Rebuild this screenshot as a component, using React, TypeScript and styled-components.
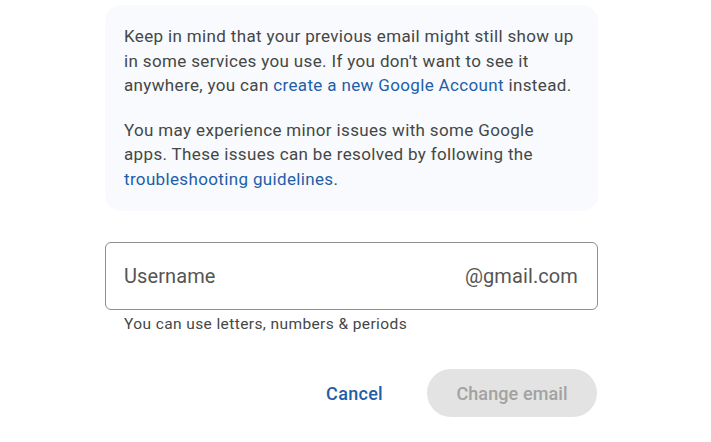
import React from "react";
import styled, { createGlobalStyle } from "styled-components";

const Global = createGlobalStyle`
  html, body { margin: 0; padding: 0; background: #ffffff; }
  body { font-family: Roboto, "Noto Sans", Arial, sans-serif; -webkit-font-smoothing: antialiased; }
`;

const Page = styled.div`
  width: 711px;
  height: 442px;
  overflow: hidden;
  padding: 5px 0 0 105px;
  box-sizing: border-box;
`;

const Column = styled.div`
  width: 493px;
  display: flex;
  flex-direction: column;
`;

const Notice = styled.div`
  background: #f8fafd;
  border-radius: 16px;
  padding: 19px 20px 20px 19px;
  display: flex;
  flex-direction: column;
  gap: 20px;
`;

const Para = styled.p`
  margin: 0;
  font-size: 17px;
  line-height: 24.5px;
  color: #444746;
  letter-spacing: 0.35px;
`;

const Link = styled.a`
  color: #1f5ea8;
  text-decoration: none;
`;

const Field = styled.div`
  margin-top: 31px;
  height: 68px;
  border: 1.5px solid #8e8e8e;
  border-radius: 6px;
  box-sizing: border-box;
  display: flex;
  align-items: center;
  justify-content: space-between;
  padding: 0 19px 0 18px;
  font-size: 20px;
  letter-spacing: 0.1px;
  color: #555;
`;

const Hint = styled.div`
  margin-top: 5px;
  padding-left: 19px;
  font-size: 15.5px;
  letter-spacing: 0.4px;
  color: #444746;
`;

const Actions = styled.div`
  margin-top: 36px;
  display: flex;
  justify-content: flex-end;
  align-items: center;
  gap: 20px;
`;

const TextButton = styled.button`
  border: none;
  background: none;
  font-family: inherit;
  font-size: 18px;
  font-weight: 500;
  letter-spacing: 0.3px;
  color: #1f5ea8;
  padding: 0 24px;
  height: 48px;
`;

const FilledButton = styled.button`
  border: none;
  background: #e3e3e3;
  font-family: inherit;
  font-size: 18px;
  font-weight: 500;
  letter-spacing: 0.1px;
  color: #a2a2a2;
  height: 48px;
  width: 170px;
  border-radius: 24px;
  margin-right: 1px;
`;

export default function App() {
  return (
    <>
      <Global />
      <Page>
        <Column>
          <Notice>
            <Para>
              Keep in mind that your previous email might still show up in some services you use. If you don't want to see it anywhere, you can{" "}
              <Link href="#">create a new Google Account</Link> instead.
            </Para>
            <Para>
              You may experience minor issues with some Google apps. These issues can be resolved by following the{" "}
              <Link href="#">troubleshooting guidelines</Link>.
            </Para>
          </Notice>
          <Field>
            <span>Username</span>
            <span>@gmail.com</span>
          </Field>
          <Hint>You can use letters, numbers &amp; periods</Hint>
          <Actions>
            <TextButton>Cancel</TextButton>
            <FilledButton>Change email</FilledButton>
          </Actions>
        </Column>
      </Page>
    </>
  );
}
